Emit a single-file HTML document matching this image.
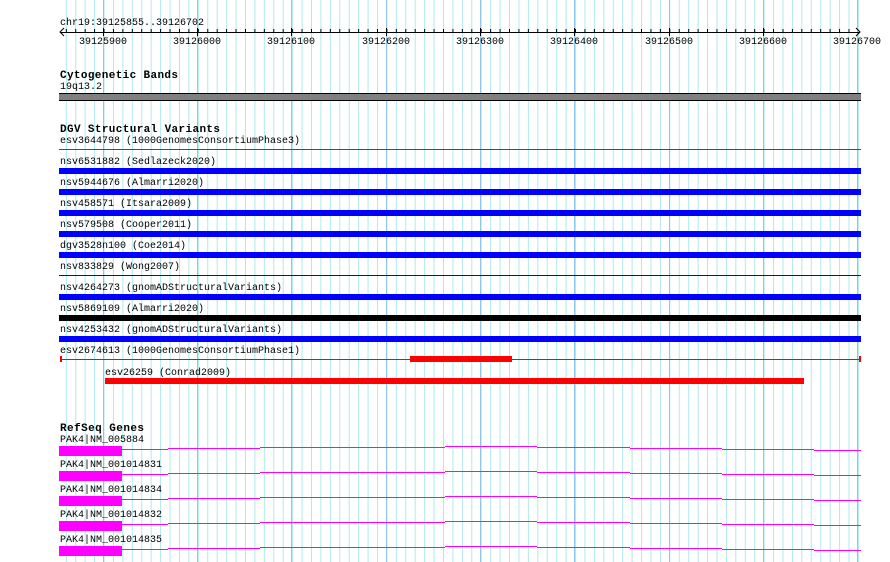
<!DOCTYPE html>
<html><head><meta charset="utf-8"><style>
html,body{margin:0;padding:0;background:#fff;width:890px;height:562px;overflow:hidden}
svg text{font-family:"Liberation Mono",monospace;font-size:10px;fill:#000}
svg text.h{font-weight:bold;font-size:11px}
</style></head><body>
<svg width="890" height="562" xmlns="http://www.w3.org/2000/svg" shape-rendering="crispEdges">
<defs>
<pattern id="g" x="65.8" y="0" width="9.43" height="562" patternUnits="userSpaceOnUse">
<rect x="0" y="0" width="1" height="562" fill="#aeeaee"/>
</pattern>
<pattern id="t" x="65.8" y="0" width="9.43" height="562" patternUnits="userSpaceOnUse">
<rect x="0" y="29" width="1" height="4" fill="#000"/>
</pattern>
</defs>
<rect x="60" y="0" width="801" height="562" fill="url(#g)"/>
<g fill="#8cc8ee">
<rect x="103" y="0" width="1" height="562"/><rect x="197" y="0" width="1" height="562"/><rect x="291" y="0" width="1" height="562"/><rect x="386" y="0" width="1" height="562"/><rect x="480" y="0" width="1" height="562"/><rect x="574" y="0" width="1" height="562"/><rect x="669" y="0" width="1" height="562"/><rect x="763" y="0" width="1" height="562"/><rect x="857" y="0" width="1" height="562"/>
</g>
<!-- ruler -->
<text x="60" y="25">chr19:39125855..39126702</text>
<rect x="60" y="32" width="800" height="1" fill="#000"/>
<rect x="62" y="0" width="795" height="562" fill="url(#t)"/>
<g fill="#000"><rect x="103" y="28" width="1" height="8"/><rect x="197" y="28" width="1" height="8"/><rect x="291" y="28" width="1" height="8"/><rect x="386" y="28" width="1" height="8"/><rect x="480" y="28" width="1" height="8"/><rect x="574" y="28" width="1" height="8"/><rect x="669" y="28" width="1" height="8"/><rect x="763" y="28" width="1" height="8"/></g>
<path d="M64 28 L60 32 L64 36 M856 28 L860 32 L856 36" stroke="#000" fill="none" shape-rendering="auto"/>
<g text-anchor="middle">
<text x="103" y="44">39125900</text><text x="197" y="44">39126000</text><text x="291" y="44">39126100</text><text x="386" y="44">39126200</text><text x="480" y="44">39126300</text><text x="574" y="44">39126400</text><text x="669" y="44">39126500</text><text x="763" y="44">39126600</text><text x="857" y="44">39126700</text>
</g>
<!-- cyto -->
<text class="h" x="60" y="78" textLength="118">Cytogenetic Bands</text>
<text x="60" y="89">19q13.2</text>
<rect x="59" y="93" width="802" height="8" fill="#808080"/>
<rect x="59" y="93" width="802" height="1" fill="#000"/><rect x="59" y="100" width="802" height="1" fill="#000"/>
<!-- DGV -->
<text class="h" x="60" y="132" textLength="160">DGV Structural Variants</text>
<text x="60" y="143">esv3644798 (1000GenomesConsortiumPhase3)</text>
<rect x="59" y="149" width="802" height="1" fill="#ff0000"/>
<text x="60" y="164">nsv6531882 (Sedlazeck2020)</text>
<rect x="59" y="168" width="802" height="6" fill="#0000ff"/>
<text x="60" y="185">nsv5944676 (Almarri2020)</text>
<rect x="59" y="189" width="802" height="6" fill="#0000ff"/>
<text x="60" y="206">nsv458571 (Itsara2009)</text>
<rect x="59" y="210" width="802" height="6" fill="#0000ff"/>
<text x="60" y="227">nsv579508 (Cooper2011)</text>
<rect x="59" y="231" width="802" height="6" fill="#0000ff"/>
<text x="60" y="248">dgv3528n100 (Coe2014)</text>
<rect x="59" y="252" width="802" height="6" fill="#0000ff"/>
<text x="60" y="269">nsv833829 (Wong2007)</text>
<rect x="59" y="275" width="802" height="1" fill="#0000ff"/>
<text x="60" y="290">nsv4264273 (gnomADStructuralVariants)</text>
<rect x="59" y="294" width="802" height="6" fill="#0000ff"/>
<text x="60" y="311">nsv5869109 (Almarri2020)</text>
<rect x="59" y="315" width="802" height="6" fill="#000"/>
<text x="60" y="332">nsv4253432 (gnomADStructuralVariants)</text>
<rect x="59" y="336" width="802" height="6" fill="#0000ff"/>
<text x="60" y="353">esv2674613 (1000GenomesConsortiumPhase1)</text>
<rect x="60" y="359" width="800" height="1" fill="#ff0000"/>
<rect x="60" y="356" width="2" height="6" fill="#ff0000"/><rect x="859" y="356" width="2" height="6" fill="#ff0000"/>
<rect x="410" y="356" width="102" height="6" fill="#ff0000"/>
<text x="105" y="375">esv26259 (Conrad2009)</text>
<rect x="105" y="378" width="699" height="6" fill="#ff0000"/>
<!-- RefSeq -->
<text class="h" x="60" y="431" textLength="84">RefSeq Genes</text>
<g id="gene">
<rect x="59" y="446" width="63" height="10" fill="#ff00ff"/>
<g fill="#ff00ff">
<rect x="122" y="449" width="46" height="1"/><rect x="168" y="448" width="92" height="1"/><rect x="260" y="447" width="185" height="1"/><rect x="445" y="446" width="92" height="1"/><rect x="537" y="447" width="93" height="1"/><rect x="630" y="448" width="92" height="1"/><rect x="722" y="449" width="92" height="1"/><rect x="814" y="450" width="47" height="1"/>
</g>
</g>
<text x="60" y="442">PAK4|NM_005884</text>
<use href="#gene" y="25"/><text x="60" y="467">PAK4|NM_001014831</text>
<use href="#gene" y="50"/><text x="60" y="492">PAK4|NM_001014834</text>
<use href="#gene" y="75"/><text x="60" y="517">PAK4|NM_001014832</text>
<use href="#gene" y="100"/><text x="60" y="542">PAK4|NM_001014835</text>
</svg>
</body></html>
